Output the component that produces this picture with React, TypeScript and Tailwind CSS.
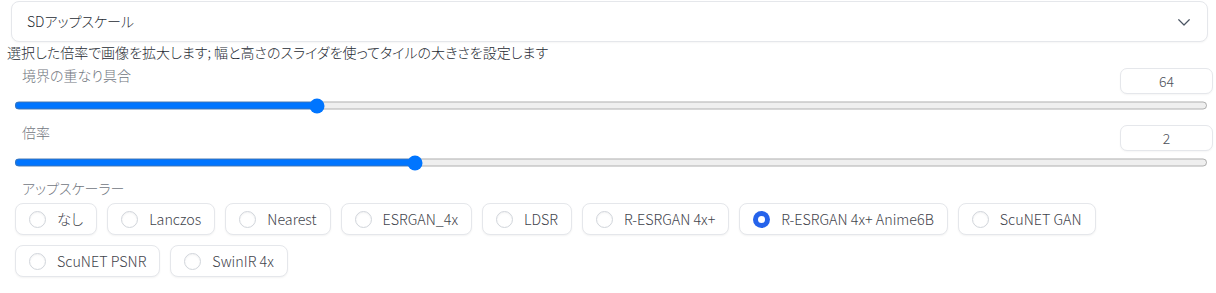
import React from "react";

const options = [
  "なし",
  "Lanczos",
  "Nearest",
  "ESRGAN_4x",
  "LDSR",
  "R-ESRGAN 4x+",
  "R-ESRGAN 4x+ Anime6B",
  "ScuNET GAN",
  "ScuNET PSNR",
  "SwinIR 4x",
];

function Chevron() {
  return (
    <svg width="18" height="18" viewBox="0 0 24 24" fill="none" stroke="#4b5563" strokeWidth="1.6" strokeLinecap="round" strokeLinejoin="round">
      <path d="m5 9 7 7 7-7" />
    </svg>
  );
}

function SliderBlock({ label, value, min, max }: { label: string; value: number; min: number; max: number }) {
  return (
    <div>
      <div className="flex justify-between items-start">
        <span className="ml-[22px] text-[14px] leading-[20px] text-[#71767e]">{label}</span>
        <div className="mt-[3px] mr-[3px] w-[93px] h-[26px] rounded-[7px] border border-[#e5e7eb] bg-white flex items-center justify-center text-[14px] text-[#4b5058] shadow-[0_1px_2px_rgba(0,0,0,0.04)]">
          {value}
        </div>
      </div>
      <input
        type="range"
        min={min}
        max={max}
        defaultValue={value}
        className="block ml-[14px] w-[1194px] h-[17px] mt-[3px] accent-[#0075ff]"
      />
    </div>
  );
}

export default function App() {
  return (
    <div
      className="w-[1216px] h-[293px] bg-white overflow-hidden text-[#1f2937] font-light [font-feature-settings:'palt']"
      style={{ fontFamily: '"Noto Sans CJK JP", "Noto Sans", sans-serif' }}
    >
      <div className="pt-[1px]">
        <div className="ml-[11px] w-[1197px] h-[41px] rounded-[8px] border border-[#e5e7eb] bg-white flex items-center justify-between pl-[15px] pr-[14px] shadow-[0_1px_2px_rgba(0,0,0,0.04)]">
          <span className="text-[14px] text-[#262b33]">SDアップスケール</span>
          <Chevron />
        </div>
      </div>
      <div className="ml-[7px] text-[14px] leading-[20px] h-[20px] text-[#262b33]">
        選択した倍率で画像を拡大します; 幅と高さのスライダを使ってタイルの大きさを設定します
      </div>
      <div className="mt-[3px]">
        <SliderBlock label="境界の重なり具合" value={64} min={0} max={256} />
      </div>
      <div className="mt-[8px]">
        <SliderBlock label="倍率" value={2} min={1} max={4} />
      </div>
      <div className="mt-[7px] ml-[22px] text-[14px] leading-[20px] text-[#71767e]">アップスケーラー</div>
      <div className="mt-[5px] ml-[15px] w-[1100px] flex flex-wrap gap-x-[10px] gap-y-[10px]">
        {options.map((o) => {
          const sel = o === "R-ESRGAN 4x+ Anime6B";
          return (
            <div
              key={o}
              className="h-[32px] flex items-center gap-[11px] px-[13px] rounded-[8px] border border-[#e5e7eb] bg-white shadow-[0_1px_2px_rgba(0,0,0,0.05)]"
            >
              {sel ? (
                <span className="w-[17px] h-[17px] rounded-full bg-[#2563eb] flex items-center justify-center">
                  <span className="w-[7px] h-[7px] rounded-full bg-white" />
                </span>
              ) : (
                <span className="w-[17px] h-[17px] rounded-full border border-[#d1d5db] bg-white shadow-[inset_0_1px_2px_rgba(0,0,0,0.05)]" />
              )}
              <span className="text-[14.3px] text-[#3f444c] whitespace-nowrap">{o}</span>
            </div>
          );
        })}
      </div>
    </div>
  );
}
